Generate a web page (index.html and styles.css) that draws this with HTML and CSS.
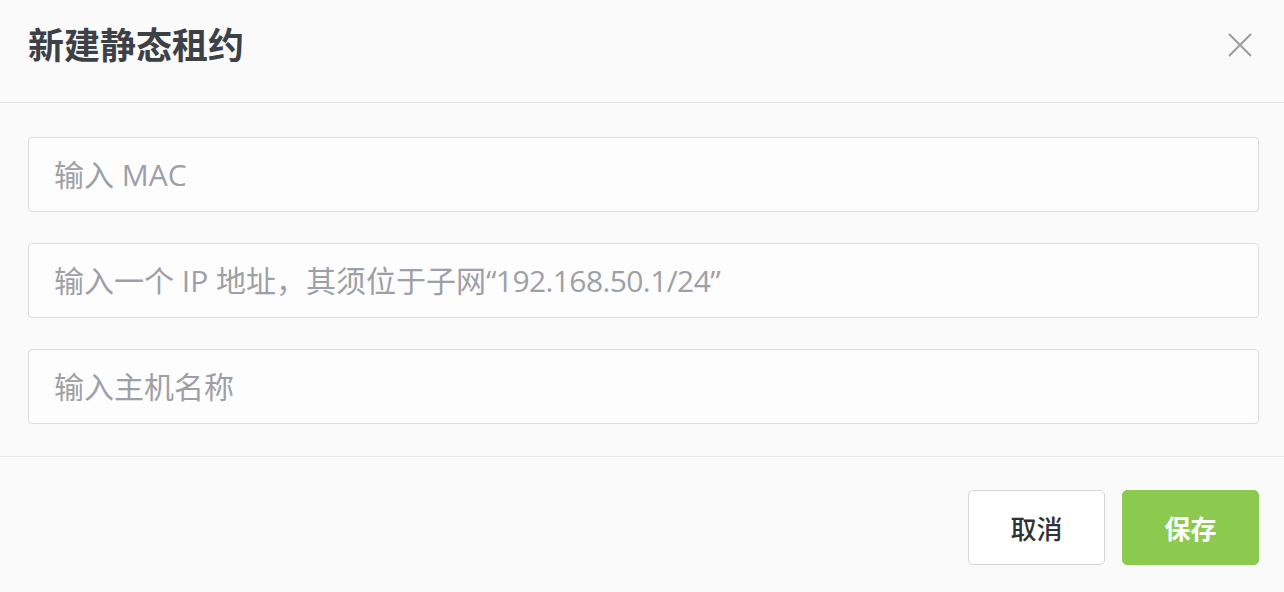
FILE: index.html
```html
<!DOCTYPE html>
<html lang="zh-CN">
<head>
<meta charset="utf-8">
<title>新建静态租约</title>
<link rel="stylesheet" href="styles.css">
</head>
<body>
<div class="dialog">
  <header class="dlg-header">
    <h1 class="dlg-title">新建静态租约</h1>
    <button class="dlg-close" aria-label="关闭">
      <svg width="26" height="26" viewBox="0 0 26 26"><path d="M2 2 L24 24 M24 2 L2 24" stroke="#9a9a9a" stroke-width="1.8" fill="none"/></svg>
    </button>
  </header>
  <main class="dlg-body">
    <div class="field"><span class="ph">输入 MAC</span></div>
    <div class="field"><span class="ph">输入一个 IP 地址，其须位于子网<span class="lat">“192.168.50.1/24”</span></span></div>
    <div class="field"><span class="ph">输入主机名称</span></div>
  </main>
  <footer class="dlg-footer">
    <button class="btn btn-cancel">取消</button>
    <button class="btn btn-save">保存</button>
  </footer>
</div>
</body>
</html>
```
FILE: styles.css
```css
html, body {
  margin: 0;
  padding: 0;
  background: #fafafb;
}
body {
  font-family: "Open Sans", "Noto Sans CJK SC", sans-serif;
  width: 1284px;
  height: 592px;
  overflow: hidden;
}
.dialog {
  display: flex;
  flex-direction: column;
}
.dlg-header {
  height: 103px;
  box-sizing: border-box;
  border-bottom: 1px solid #e6e6e8;
  display: flex;
  align-items: center;
  justify-content: space-between;
  padding: 0 31px 16px 28px;
}
.dlg-title {
  margin: 0;
  font-family: "Noto Sans CJK SC", sans-serif;
  font-size: 36px;
  font-weight: 700;
  color: #3d4045;
  line-height: 1;
}
.dlg-close {
  border: 0;
  background: none;
  padding: 0;
  width: 26px;
  height: 26px;
  margin-top: 4px;
  display: flex;
}
.dlg-body {
  padding: 34px 25px 32px 28px;
  border-bottom: 1px solid #e6e6e8;
  display: flex;
  flex-direction: column;
  gap: 31px;
}
.field {
  height: 75px;
  box-sizing: border-box;
  border: 1px solid #dcdcdf;
  border-radius: 4px;
  background: #fdfdfd;
  display: flex;
  align-items: center;
  padding-left: 25px;
}
.ph {
  font-size: 30px;
  color: #9da0a6;
  line-height: 1;
  white-space: nowrap;
}
.lat {
  letter-spacing: -0.6px;
}
.dlg-footer {
  display: flex;
  justify-content: flex-end;
  gap: 17px;
  padding: 33px 25px 0 0;
}
.btn {
  width: 137px;
  height: 75px;
  box-sizing: border-box;
  border-radius: 5px;
  font-family: "Noto Sans CJK SC", sans-serif;
  font-size: 26px;
  cursor: pointer;
}
.btn-cancel {
  background: #ffffff;
  border: 1px solid #d6d6d9;
  color: #2f3236;
  font-weight: 500;
}
.btn-save {
  background: #8bca4f;
  border: 1px solid #8bca4f;
  color: #ffffff;
  font-weight: 700;
}
```
